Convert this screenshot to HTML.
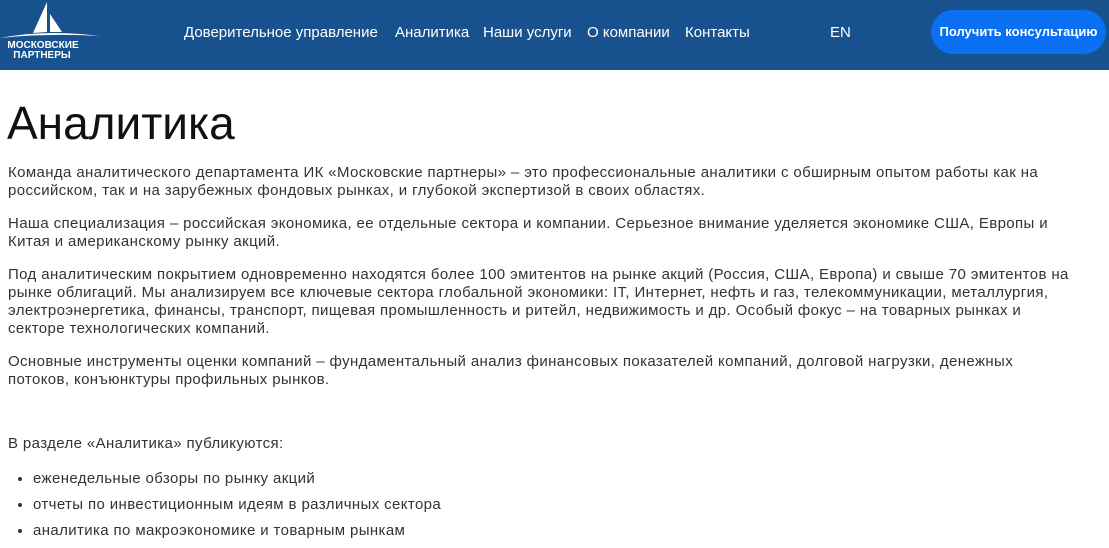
<!DOCTYPE html>
<html><head><meta charset="utf-8"><style>
body{margin:0;width:1109px;height:541px;overflow:hidden;background:#fff;font-family:"Liberation Sans",sans-serif;color:#333;}
.hdr{height:70px;background:#17528f;position:relative;color:#fff;}
.nav{position:absolute;top:24px;font-size:15px;white-space:nowrap;}
.btn{position:absolute;left:931px;top:10px;width:175px;height:44px;border-radius:22px;background:#0b6ff2;color:#fff;font-size:13px;font-weight:bold;line-height:44px;text-align:center;}
h1{position:absolute;left:7px;top:96px;margin:0;font-weight:normal;font-size:46px;color:#111;}
.p{position:absolute;left:8px;font-size:15px;line-height:18px;white-space:nowrap;letter-spacing:0.38px;}
ul{position:absolute;left:0;top:470px;margin:0;padding:0 0 0 33px;font-size:15px;letter-spacing:0.38px;}
li{height:26px;line-height:18px;}
</style></head><body>
<div class="hdr">
<svg width="110" height="70" style="position:absolute;left:0;top:0">
<polygon points="47,2 47,32 33,33" fill="#fff"/>
<polygon points="50,14 50,32 62,32" fill="#fff"/>
<path d="M0,38 Q45,29 100,36 Q45,33 0,38Z" fill="#fff"/>
<text x="43" y="48" fill="#fff" font-size="10" font-weight="bold" text-anchor="middle" font-family="Liberation Sans">МОСКОВСКИЕ</text>
<text x="42" y="58" fill="#fff" font-size="10" font-weight="bold" text-anchor="middle" font-family="Liberation Sans">ПАРТНЕРЫ</text>
</svg>
<span class="nav" style="left:184px">Доверительное управление</span>
<span class="nav" style="left:395px">Аналитика</span>
<span class="nav" style="left:483px">Наши услуги</span>
<span class="nav" style="left:587px">О компании</span>
<span class="nav" style="left:685px">Контакты</span>
<span class="nav" style="left:830px">EN</span>
<div class="btn">Получить консультацию</div>
</div>
<h1>Аналитика</h1>
<div class="p" style="top:164px">Команда аналитического департамента ИК «Московские партнеры» – это профессиональные аналитики с обширным опытом работы как на<br>российском, так и на зарубежных фондовых рынках, и глубокой экспертизой в своих областях.</div>
<div class="p" style="top:215px">Наша специализация – российская экономика, ее отдельные сектора и компании. Серьезное внимание уделяется экономике США, Европы и<br>Китая и американскому рынку акций.</div>
<div class="p" style="top:266px">Под аналитическим покрытием одновременно находятся более 100 эмитентов на рынке акций (Россия, США, Европа) и свыше 70 эмитентов на<br>рынке облигаций. Мы анализируем все ключевые сектора глобальной экономики: IT, Интернет, нефть и газ, телекоммуникации, металлургия,<br>электроэнергетика, финансы, транспорт, пищевая промышленность и ритейл, недвижимость и др. Особый фокус – на товарных рынках и<br>секторе технологических компаний.</div>
<div class="p" style="top:353px">Основные инструменты оценки компаний – фундаментальный анализ финансовых показателей компаний, долговой нагрузки, денежных<br>потоков, конъюнктуры профильных рынков.</div>
<div class="p" style="top:435px">В разделе «Аналитика» публикуются:</div>
<ul><li>еженедельные обзоры по рынку акций</li><li>отчеты по инвестиционным идеям в различных сектора</li><li>аналитика по макроэкономике и товарным рынкам</li></ul>
</body></html>
